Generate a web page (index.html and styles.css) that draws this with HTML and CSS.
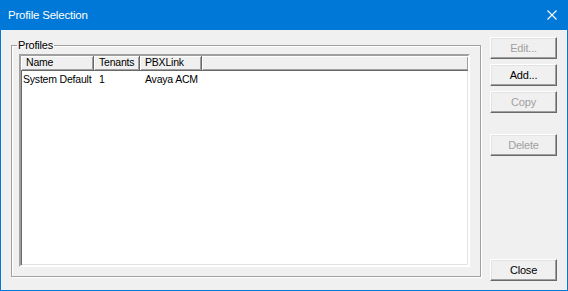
FILE: index.html
```html
<!DOCTYPE html>
<html lang="en">
<head>
  <meta charset="UTF-8">
  <title>Profile Selection</title>
  <link rel="stylesheet" href="styles.css">
</head>
<body>
  <div class="window">
    <div class="titlebar">
      <span class="title">Profile Selection</span>
      <svg class="close-x" width="10" height="10" viewBox="0 0 10 10">
        <path d="M0.5 0.5 L9.5 9.5 M9.5 0.5 L0.5 9.5" stroke="#fff" stroke-width="1.1" fill="none"/>
      </svg>
    </div>

    <div class="content">
      <fieldset class="group">
        <legend>Profiles</legend>
        <div class="listview">
          <div class="header">
            <div class="col col-name">Name</div>
            <div class="col col-tenants">Tenants</div>
            <div class="col col-pbx">PBXLink</div>
            <div class="col col-fill"></div>
          </div>
          <div class="row">
            <div class="cell col-name">System Default</div>
            <div class="cell col-tenants">1</div>
            <div class="cell col-pbx">Avaya ACM</div>
          </div>
        </div>
      </fieldset>

      <div class="buttons">
        <button class="btn" disabled>Edit...</button>
        <button class="btn">Add...</button>
        <button class="btn" disabled>Copy</button>
        <button class="btn btn-delete" disabled>Delete</button>
        <button class="btn btn-close">Close</button>
      </div>
    </div>
  </div>
</body>
</html>
```

FILE: styles.css
```css
body {
  margin: 0;
  font-family: "Liberation Sans", Arial, sans-serif;
  font-size: 10.5px;
  letter-spacing: -0.2px;
  color: #000;
  background-color: #f0f0f0;
}
.window {
  width: 568px;
  height: 291px;
  box-sizing: border-box;
  display: flex;
  flex-direction: column;
  background-color: #f0f0f0;
  border: 1px solid #0078d7;
  border-top: none;
}
.titlebar {
  height: 30px;
  flex: none;
  margin: 0 -1px;
  background-color: #0078d7;
  color: #fff;
  display: flex;
  align-items: center;
  justify-content: space-between;
  padding: 0 10px 0 8px;
}
.title {
  font-size: 11.5px;
  letter-spacing: -0.2px;
  margin-top: -1px;
}
.close-x {
  margin-right: 1px;
  margin-top: -1px;
}
.content {
  flex: 1;
  display: flex;
  padding: 7px 10px 9px 10px;
}
.group {
  margin: 2px 0 4px 0;
  padding: 2px 10px 9px 7px;
  width: 470px;
  box-sizing: border-box;
  border: 1px solid #a0a0a0;
  box-shadow: inset 1px 1px 0 #fff, 1px 1px 0 #fff;
  display: flex;
  flex-direction: column;
}
.group legend {
  padding: 0 1px;
  margin-left: -2px;
  line-height: 13px;
  font-size: 11px;
}
.listview {
  flex: 1;
  background-color: #fff;
  border-style: solid;
  border-width: 2px;
  border-color: #a0a0a0 #fff #fff #a0a0a0;
  box-shadow: inset 1px 1px 0 #696969, inset -1px -1px 0 #e3e3e3;
  padding: 0;
}
.header {
  display: flex;
  height: 15px;
}
.header .col {
  flex: none;
  box-sizing: border-box;
  height: 15px;
  line-height: 13px;
  padding-left: 5px;
  white-space: nowrap;
  overflow: hidden;
  background-color: #f0f0f0;
  border-right: 1px solid #696969;
  border-bottom: 1px solid #696969;
  box-shadow: inset 1px 1px 0 #fff, inset -1px -1px 0 #a0a0a0;
}
.col-name { width: 73px; }
.col-tenants { width: 46px; }
.col-pbx { width: 62px; }
.header .col-fill {
  flex: 1;
  border-right: none;
}
.row {
  display: flex;
  height: 15px;
  line-height: 15px;
  margin-top: 1px;
}
.cell {
  flex: none;
  box-sizing: border-box;
  padding-left: 5px;
  white-space: nowrap;
}
.row .col-name { padding-left: 2px; }
.buttons {
  margin-left: auto;
  width: 67px;
  display: flex;
  flex-direction: column;
}
.btn {
  height: 22px;
  margin-bottom: 5px;
  font-family: inherit;
  font-size: 11px;
  letter-spacing: -0.2px;
  color: #000;
  background-color: #f0f0f0;
  border-style: solid;
  border-width: 1px;
  border-color: #fff #696969 #696969 #fff;
  box-shadow: inset -1px -1px 0 #a0a0a0, inset 1px 1px 0 #e3e3e3;
  padding: 0;
}
.btn:disabled {
  color: #a0a0a0;
}
.btn-delete {
  margin-top: 16px;
}
.btn-close {
  margin-top: auto;
  margin-bottom: 0;
}
```
